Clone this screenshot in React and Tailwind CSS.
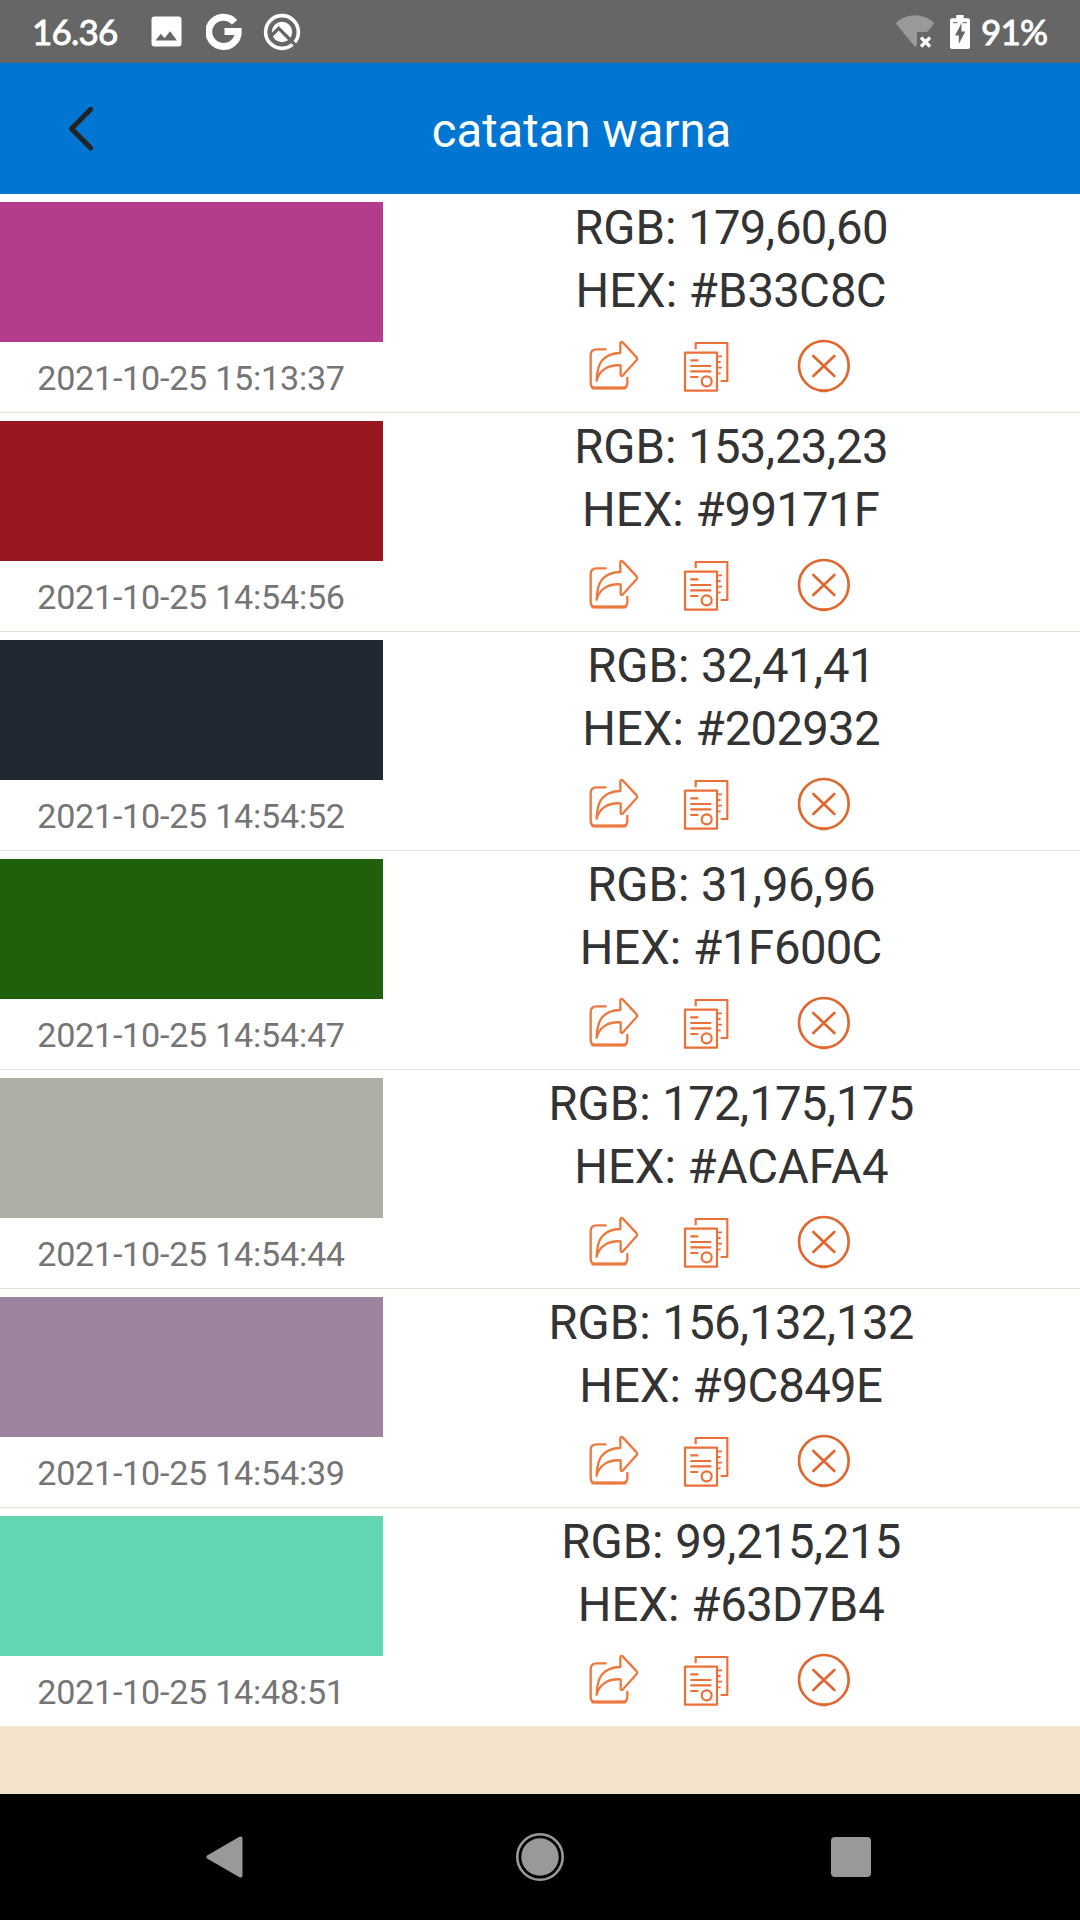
import React from 'react';

const records = [
  { color: '#B33C8C', rgb: '179,60,60', hex: '#B33C8C', date: '2021-10-25 15:13:37' },
  { color: '#99171F', rgb: '153,23,23', hex: '#99171F', date: '2021-10-25 14:54:56' },
  { color: '#202932', rgb: '32,41,41', hex: '#202932', date: '2021-10-25 14:54:52' },
  { color: '#1F600C', rgb: '31,96,96', hex: '#1F600C', date: '2021-10-25 14:54:47' },
  { color: '#ACAFA4', rgb: '172,175,175', hex: '#ACAFA4', date: '2021-10-25 14:54:44' },
  { color: '#9C849E', rgb: '156,132,132', hex: '#9C849E', date: '2021-10-25 14:54:39' },
  { color: '#63D7B4', rgb: '99,215,215', hex: '#63D7B4', date: '2021-10-25 14:48:51' },
];

const ImageIcon = () => (
  <svg width="31" height="31" viewBox="0 0 31 31">
    <path
      fill="#fff"
      fillRule="evenodd"
      d="M3.5 0.5h24a3 3 0 0 1 3 3v24a3 3 0 0 1-3 3h-24a3 3 0 0 1-3-3v-24a3 3 0 0 1 3-3z M4.5 24.5h21.5l-7-9.2-5.4 7-3.8-4.6z"
    />
  </svg>
);

const GoogleIcon = () => (
  <svg width="36" height="38" viewBox="0 0 36 38" fill="none" stroke="#fff" strokeWidth="7">
    <path d="M28.6 9.2A14.7 14.7 0 1 0 32.2 18.6H18.5" strokeLinejoin="miter" />
  </svg>
);

const AndroidQIcon = () => (
  <svg width="38" height="38" viewBox="0 0 38 38" fill="none">
    <circle cx="19" cy="19" r="16.4" stroke="#fff" strokeWidth="3.6" />
    <circle cx="19" cy="19" r="10.2" fill="#fff" />
    <path d="M8.5 22.5L15.7 15.3L32.5 32.1" stroke="#666" strokeWidth="3.4" />
  </svg>
);

const WifiOffIcon = () => (
  <svg width="40" height="36" viewBox="0 0 40 36">
    <path fill="#999" d="M20 33L0.7 9.2C6 4 13 1.3 20 1.3s14 2.7 19.3 7.9L32.2 18H22v13z" />
    <path d="M26 23.5l9 9M35 23.5l-9 9" stroke="#fff" strokeWidth="3.4" />
  </svg>
);

const BatteryIcon = () => (
  <svg width="20" height="34" viewBox="0 0 20 34">
    <path
      fill="#fff"
      d="M6.3 0h7.4v3.3H18a2 2 0 0 1 2 2V32a2 2 0 0 1-2 2H2a2 2 0 0 1-2-2V5.3a2 2 0 0 1 2-2h4.3z"
    />
    <path fill="#666" d="M11.5 8v8.5h3.8L8.8 29v-8.5H5z" />
    <path d="M3 7.7h4.5M12.5 7.7H17" stroke="#666" strokeWidth="1" />
  </svg>
);

const ShareIcon = () => (
  <svg width="52" height="56" viewBox="54 39 156 168" fill="none" stroke="#EB7A42" strokeWidth="7" strokeLinecap="round" strokeLinejoin="round">
    <path d="M107 73H80Q62 73 62 90V173Q62 189 78 189H157Q172 189 172 174V159" />
    <path d="M68 189H166" strokeWidth="8.5" />
    <path d="M80 167C81 116 98 85 151 84V54Q153 48 158 52L200 97Q203 101 200 105L159 151Q154 155 152 150V121C111 118 87 139 80 167Z" />
  </svg>
);

const CopyIcon = () => (
  <svg width="48" height="56" viewBox="339 39 144 168" fill="none" stroke="#EB7038" strokeWidth="6.5">
    <path d="M377 73V54H472V168H452" strokeLinejoin="round" />
    <rect x="345" y="83" width="96" height="114" strokeLinejoin="round" />
    <path d="M361 106H385M361 123H424M361 139H424M361 156H385" />
    <path d="M441 94H456M441 111H452M441 128H456M441 145H452" strokeWidth="5.5" />
    <circle cx="410" cy="169" r="15" />
  </svg>
);

const DeleteIcon = () => (
  <svg width="56" height="56" viewBox="48 39 168 168" fill="none" stroke="#DE682F" strokeWidth="8" strokeLinecap="round">
    <circle cx="131.5" cy="122.5" r="74.5" />
    <path d="M122 199.5h18" strokeWidth="5" />
    <path d="M100 93L163 153M163 93L100 153" />
  </svg>
);

const StatusBar = () => (
  <div className="flex h-[63px] items-center justify-between bg-[#666666] pl-8 pr-[32px] font-['Lato',sans-serif] text-[35px] leading-[63px] tracking-[-0.8px] text-white">
    <div className="flex items-center">
      <span className="w-[119px] [-webkit-text-stroke:0.9px_white]">16.36</span>
      <ImageIcon />
      <span className="w-6" />
      <GoogleIcon />
      <span className="w-[21px]" />
      <AndroidQIcon />
    </div>
    <div className="flex items-center">
      <WifiOffIcon />
      <span className="w-[15px]" />
      <BatteryIcon />
      <span className="ml-[11px] w-[67px] [-webkit-text-stroke:0.9px_white]">91%</span>
    </div>
  </div>
);

const Header = () => (
  <header className="flex h-[131px] items-center bg-[#0075D1]">
    <button className="flex w-[164px] pl-[66px]" aria-label="back">
      <svg width="30" height="48" viewBox="0 0 30 48" fill="none" stroke="#212325" strokeWidth="5" strokeLinecap="round" strokeLinejoin="round">
        <path d="M24.7 4.3L5.5 23.7L24.7 42.9" />
      </svg>
    </button>
    <h1 className="flex-1 pr-[81px] pt-[5px] text-center text-[47.25px] leading-[63px] text-white">catatan warna</h1>
  </header>
);

// Digits are set slightly tighter than the letters around them
const TightDigits = ({ text }) =>
  text.split(/(\d+)/).map((part, index) =>
    /\d/.test(part) ? (
      <span key={index} className="tracking-[-0.015em]">{part}</span>
    ) : (
      part
    )
  );

const ColorRow = ({ record }) => (
  <li className="flex h-[219px] border-b border-[#E6E1D8] bg-white last:h-[218px] last:border-b-0">
    <div className="w-[383px] pt-2">
      <div className="h-[140px]" style={{ backgroundColor: record.color }} />
      <p className="pt-[1px] pr-[1px] text-center text-[34.125px] leading-[70px] tracking-[-0.25px] text-[#757575]">
        {record.date}
      </p>
    </div>
    <div className="flex-1 pt-[3px] pr-[1px] text-center text-[47.25px] leading-[63px] text-[#333333]">
      <p>RGB: <TightDigits text={record.rgb} /></p>
      <p>HEX: <TightDigits text={record.hex} /></p>
      <div className="flex pl-[205px] pt-[15px]">
        <ShareIcon />
        <span className="w-[43px]" />
        <CopyIcon />
        <span className="w-[65px]" />
        <DeleteIcon />
      </div>
    </div>
  </li>
);

const NavigationBar = () => (
  <nav className="flex h-[126px] items-center justify-center bg-black pr-[3px]">
    <svg width="38" height="44" viewBox="0 0 38 44">
      <path d="M2.5 22L34.5 3.5V40.5Z" fill="#999" stroke="#999" strokeWidth="4" strokeLinejoin="round" />
    </svg>
    <svg className="ml-[271px] mr-[266px]" width="50" height="50" viewBox="0 0 50 50">
      <circle cx="25" cy="25" r="22.7" fill="none" stroke="#999" strokeWidth="2.6" />
      <circle cx="25" cy="25" r="18.7" fill="#999" />
    </svg>
    <div className="size-10 rounded-[4px] bg-[#999999]" />
  </nav>
);

const App = () => {
  return (
    <div className="flex h-[1920px] w-[1080px] flex-col overflow-hidden bg-[#F2E3CA] font-['Roboto',sans-serif]">
      <StatusBar />
      <Header />
      <ul className="flex-1">
        {records.map((record) => (
          <ColorRow key={record.date} record={record} />
        ))}
      </ul>
      <NavigationBar />
    </div>
  );
};

export default App;
